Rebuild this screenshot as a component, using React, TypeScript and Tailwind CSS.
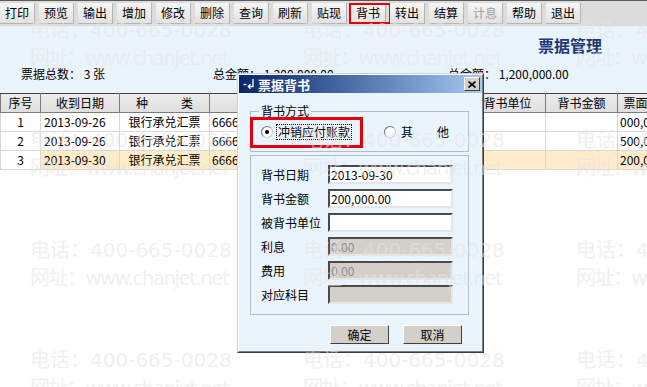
const tools = ['打印', '预览', '输出', '增加', '修改', '删除', '查询', '刷新', '贴现', '背书', '转出', '结算', '计息', '帮助', '退出'];

const rows = [
  { no: '1', date: '2013-09-26', kind: '银行承兑汇票', code: '66660001', face: '000,000.00', hl: false },
  { no: '2', date: '2013-09-26', kind: '银行承兑汇票', code: '66660002', face: '500,000.00', hl: false },
  { no: '3', date: '2013-09-30', kind: '银行承兑汇票', code: '66660003', face: '200,000.00', hl: true },
];

const fields = [
  { label: '背书日期', value: '2013-09-30', disabled: false },
  { label: '背书金额', value: '200,000.00', disabled: false },
  { label: '被背书单位', value: '', disabled: false },
  { label: '利息', value: '0.00', disabled: true },
  { label: '费用', value: '0.00', disabled: true },
  { label: '对应科目', value: '', disabled: true },
];

function ToolButton({ label }: { label: string }) {
  const active = label === '背书';
  const disabled = label === '计息';
  return (
    <div className="relative">
      <div
        className={`flex h-[21px] w-[35px] items-center justify-center border-r border-b border-[#b4b4b4] bg-gradient-to-b from-[#f6f6f6] to-[#e2e2e2] ${
          disabled ? 'text-[#a0a0a0]' : 'text-black'
        }`}
      >
        {label}
      </div>
      {active && <div className="pointer-events-none absolute -left-[2px] -right-[5px] top-0 bottom-0 border-2 border-[#e4000b]" />}
    </div>
  );
}

function Watermark() {
  const cells = Array.from({ length: 12 });
  return (
    <div className="pointer-events-none absolute inset-0 grid grid-cols-[repeat(3,273px)] auto-rows-[110px] pl-[30px] pt-[16px] font-['DejaVu_Sans','Noto_Sans_CJK_SC',sans-serif] text-[20px] leading-[28px] text-[rgba(228,228,228,0.55)]">
      {cells.map((_, i) => (
        <div key={i} className="whitespace-nowrap">
          <div>电话：400-665-0028</div>
          <div className="tracking-[-1.6px]">网址：www.chanjet.net</div>
        </div>
      ))}
    </div>
  );
}

function Field({ label, value, disabled }: { label: string; value: string; disabled: boolean }) {
  return (
    <div className="flex h-[19px] items-center">
      <div className="w-[67px]">{label}</div>
      <div
        className={`flex h-[19px] w-[125px] items-center border-2 border-t-[#4a4a4a] border-l-[#4a4a4a] border-r-[#e6e6e6] border-b-[#e6e6e6] pl-[1px] ${
          disabled ? 'bg-[#d4d0c8] text-[#8a8a8a]' : 'bg-white text-black'
        }`}
      >
        {value}
      </div>
    </div>
  );
}

function Dialog() {
  return (
    <div className="absolute left-[237px] top-[73px] flex h-[280px] w-[247px] flex-col border border-t-[#d4d0c8] border-l-[#d4d0c8] border-r-[#3c3c3c] border-b-[#3c3c3c]">
      <div className="flex flex-1 flex-col border border-t-white border-l-white border-r-[#808080] border-b-[#808080] bg-[#eaf4fd]">
        {/* title bar */}
        <div className="flex h-[18px] items-center bg-gradient-to-r from-[#0a246a] to-[#a6caf0] pl-[4px] pr-[2px]">
          <svg width="14" height="12" viewBox="0 0 14 12" fill="none" stroke="white" strokeWidth="1.3">
            <path d="M0.5 6.5h3" />
            <path d="M10 1v7.5H5.5" />
            <path d="M7.5 6.3L5.3 8.5l2.2 2.2" />
          </svg>
          <span className="ml-[1px] text-[13px] font-bold leading-none text-white">票据背书</span>
          <div className="ml-auto flex h-[14px] w-[16px] items-center justify-center border border-t-white border-l-white border-r-[#404040] border-b-[#404040] bg-[#d4d0c8]">
            <svg width="8" height="7" viewBox="0 0 8 7" stroke="black" strokeWidth="1.6">
              <path d="M0.5 0.5l7 6M7.5 0.5l-7 6" />
            </svg>
          </div>
        </div>

        {/* 背书方式 */}
        <fieldset className="mt-[10px] ml-[11px] w-[219px] border border-[#aebccb] px-0 pb-[6px]">
          <legend className="ml-[8px] px-[2px] leading-[16px]">背书方式</legend>
          <div className="flex h-[26px] items-center pl-[10px]">
            <span className="flex h-[12px] w-[12px] items-center justify-center rounded-full border border-t-[#707070] border-l-[#707070] border-r-[#d0d0d0] border-b-[#d0d0d0] bg-white">
              <span className="h-[4px] w-[4px] rounded-full bg-black" />
            </span>
            <span className="ml-[3px] border border-dotted border-black px-[1px] leading-[14px]">冲销应付账款</span>
            <span className="ml-[32px] h-[12px] w-[12px] rounded-full border border-t-[#707070] border-l-[#707070] border-r-[#d0d0d0] border-b-[#d0d0d0] bg-white" />
            <span className="ml-[5px] flex gap-[24px]">
              <span>其</span>
              <span>他</span>
            </span>
          </div>
        </fieldset>

        <fieldset className="mt-[3px] ml-[11px] flex w-[219px] flex-col gap-[5px] border border-[#aebccb] pt-[9px] pb-[10px] pl-[10px]">
          {fields.map((f) => (
            <Field key={f.label} {...f} />
          ))}
        </fieldset>

        <div className="mt-[10px] ml-[91px] flex gap-[14px]">
          <div className="flex h-[19px] w-[59px] items-center justify-center border border-t-white border-l-white border-r-[#404040] border-b-[#404040] bg-[#d4d0c8]">确定</div>
          <div className="flex h-[19px] w-[59px] items-center justify-center border border-t-white border-l-white border-r-[#404040] border-b-[#404040] bg-[#d4d0c8]">取消</div>
        </div>
      </div>

      {/* annotation */}
      <div className="pointer-events-none absolute left-[12px] top-[43px] h-[31px] w-[113px] border-[3px] border-[#e4000b]" />
    </div>
  );
}

export default function App() {
  return (
    <div className="relative h-[387px] w-[647px] overflow-hidden bg-white font-['Noto_Sans_CJK_SC',sans-serif] text-[12px] text-black">
      {/* toolbar */}
      <div className="flex h-[26px] items-center gap-[4px] border-t border-[#5a5a5a] bg-[#dcdcdc]">
        {tools.map((t) => (
          <ToolButton key={t} label={t} />
        ))}
      </div>

      {/* header */}
      <div className="flex h-[67px] flex-col bg-[#eaf4fd]">
        <div className="mt-[8px] h-[22px] pr-[45px] text-right text-[16px] font-bold leading-[22px] text-[#1b3a78]">票据管理</div>
        <div className="mt-[10px] flex h-[16px] items-center leading-[16px]">
          <div className="w-[213px] pl-[21px]">票据总数： 3 张</div>
          <div className="w-[235px]">总金额： 1,200,000.00</div>
          <div>总金额： 1,200,000.00</div>
        </div>
      </div>

      {/* table */}
      <table className="w-[677px] table-fixed border-collapse">
        <colgroup>
          <col className="w-[40px]" />
          <col className="w-[79px]" />
          <col className="w-[90px]" />
          <col className="w-[100px]" />
          <col className="w-[80px]" />
          <col className="w-[80px]" />
          <col className="w-[76px]" />
          <col className="w-[72px]" />
          <col className="w-[60px]" />
        </colgroup>
        <thead>
          <tr className="h-[19px] bg-gradient-to-b from-[#ececec] to-[#dedede]">
            {['序号', '收到日期', 'kind', '编号', '出票日期', '到期日期', '背书单位', '背书金额', '票面金额'].map((h) => (
              <th key={h} className="whitespace-nowrap border border-[#7c7c7c] border-t-[#404040] p-0 text-center font-normal">
                {h === 'kind' ? (
                  <span className="flex justify-center gap-[33px]">
                    <span>种</span>
                    <span>类</span>
                  </span>
                ) : (
                  h
                )}
              </th>
            ))}
          </tr>
        </thead>
        <tbody>
          {rows.map((r) => {
            const bg = r.hl ? 'bg-[#fdecc9]' : 'bg-white';
            const cell = `border border-[#d8d8d8] p-0 ${bg}`;
            return (
              <tr key={r.no} className="h-[18px]">
                <td className="border border-[#d8d8d8] bg-white p-0 text-center">{r.no}</td>
                <td className={`${cell} pl-[3px]`}>{r.date}</td>
                <td className={`${cell} text-center`}>{r.kind}</td>
                <td className={`${cell} pl-[2px]`}>{r.code}</td>
                <td className={cell}>2013-09-26</td>
                <td className={cell}>2014-03-26</td>
                <td className={cell} />
                <td className={cell} />
                <td className={`${cell} pl-[2px] whitespace-nowrap`}>{r.face}</td>
              </tr>
            );
          })}
        </tbody>
      </table>

      <Dialog />
      <Watermark />
    </div>
  );
}
